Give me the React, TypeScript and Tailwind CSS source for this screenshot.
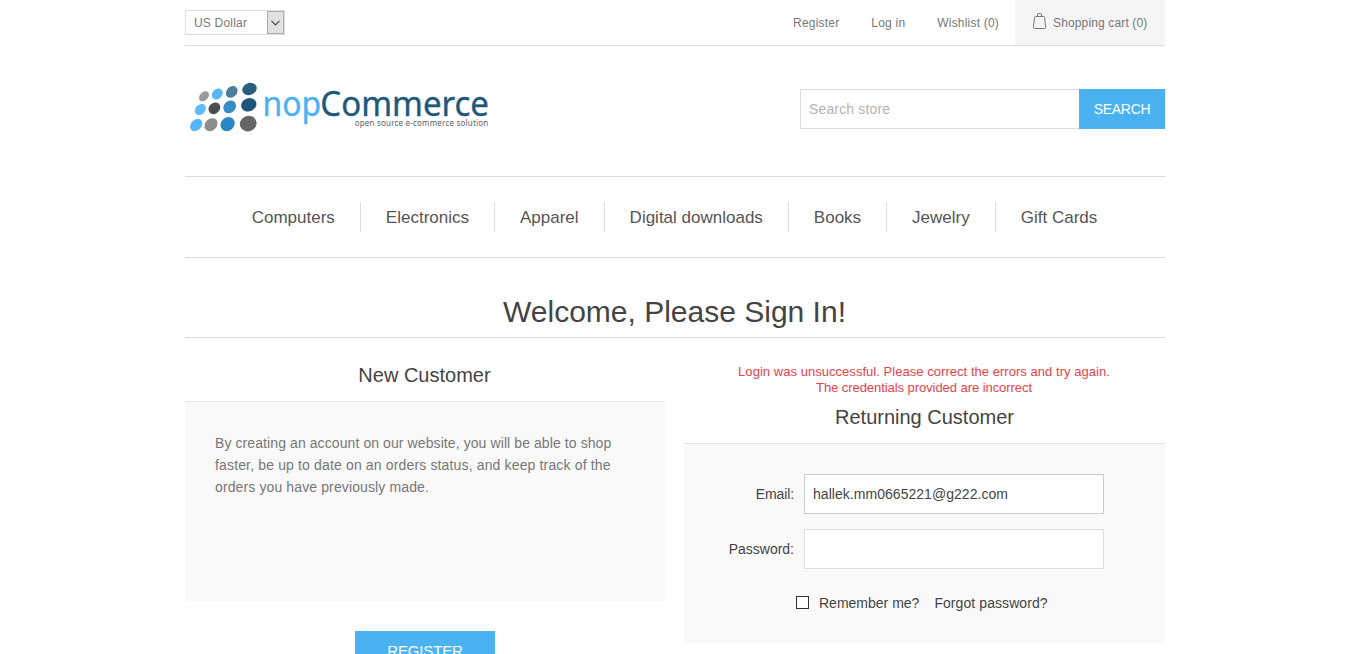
import React from "react";

const dots = [
  { x: 19, y: 21.3, rx: 5.8, ry: 4.1, fill: "#97999b" },
  { x: 32.3, y: 19, rx: 6.1, ry: 4.8, fill: "#56b6f6" },
  { x: 46.7, y: 16.9, rx: 6.5, ry: 5.2, fill: "#4b7b97" },
  { x: 64.5, y: 14, rx: 7.4, ry: 5.9, fill: "#245a7c" },
  { x: 15.3, y: 34.5, rx: 6.2, ry: 4.8, fill: "#59b9fa" },
  { x: 29.4, y: 33.3, rx: 6.4, ry: 5.3, fill: "#4a4a4c" },
  { x: 44.7, y: 31.8, rx: 6.9, ry: 5.8, fill: "#338ac4" },
  { x: 63.8, y: 29.8, rx: 7.8, ry: 6.5, fill: "#17527a" },
  { x: 11.2, y: 50, rx: 6.9, ry: 5.2, fill: "#50b4f8" },
  { x: 26, y: 49.7, rx: 7.2, ry: 5.8, fill: "#888a8c" },
  { x: 42.6, y: 49.1, rx: 7.6, ry: 6.6, fill: "#2484c2" },
  { x: 63.2, y: 48.6, rx: 8.4, ry: 7.7, fill: "#606264" },
];

function Logo() {
  return (
    <svg width="310" height="65" viewBox="0 0 310 65" className="mt-[29px] block shrink-0">
      <defs>
        <pattern id="grain" width="3" height="3" patternUnits="userSpaceOnUse">
          <circle cx="1" cy="1" r="0.5" fill="#fff" fillOpacity="0.25" />
        </pattern>
      </defs>
      {dots.map((d, i) => (
        <g key={i} transform={`rotate(${i % 4 === 3 ? -22 : -45} ${d.x} ${d.y})`}>
          <ellipse cx={d.x} cy={d.y} rx={d.rx} ry={d.ry} fill={d.fill} />
          <ellipse cx={d.x} cy={d.y} rx={d.rx} ry={d.ry} fill="url(#grain)" />
        </g>
      ))}
      <g fontFamily="'Noto Sans', sans-serif" fontSize="34.5" strokeWidth="0.35">
        <text x="77.5" y="41.2" textLength="58.5" lengthAdjust="spacingAndGlyphs" fill="#4ab2f1" stroke="#4ab2f1">nop</text>
        <text x="135.3" y="41.2" textLength="168.7" lengthAdjust="spacingAndGlyphs" fill="#20587b" stroke="#20587b">Commerce</text>
      </g>
      <text x="169.7" y="51.3" textLength="133.5" fontFamily="'Noto Sans', sans-serif" fontSize="8" fill="#59636c">
        open source e-commerce solution
      </text>
    </svg>
  );
}

const categories = ["Computers", "Electronics", "Apparel", "Digital downloads", "Books", "Jewelry", "Gift Cards"];

export default function App() {
  return (
    <div className="h-[654px] overflow-hidden bg-white pl-[185px] font-['Liberation_Sans',Arial,sans-serif] text-sm text-[#777]">
      <div className="w-[980px]">
        <header>
          <div className="flex h-[46px] justify-between border-b border-[#ddd] text-xs tracking-[0.2px]">
            <div className="mt-2.5 flex h-[25px] w-[100px] justify-between border border-[#ddd]">
              <span className="pl-2 leading-[24px]">US Dollar</span>
              <span className="flex w-[17px] items-center justify-center border border-[#adadad] bg-[#e1e1e1]">
                <svg width="9" height="6" viewBox="0 0 9 6" fill="none" stroke="#444" strokeWidth="1.2">
                  <path d="M0.5 0.8 4.5 4.8 8.5 0.8" />
                </svg>
              </span>
            </div>
            <div className="flex leading-[46px]">
              <a className="mr-8">Register</a>
              <a className="mr-8">Log in</a>
              <a className="mr-4">Wishlist (0)</a>
              <a className="flex h-[45px] w-[150px] bg-[#f5f5f5] pl-[18px] tracking-[0.14px]">
                <svg width="14" height="18" viewBox="0 0 14 18" fill="none" stroke="#777" className="mt-3 mr-1.5">
                  <path d="M2.5 4.5h8.1q.9 0 1 .9l1 10q.1 1.1-1 1.1H1.5q-1.1 0-1-1.1l1-10q.1-.9 1-.9Z" />
                  <path d="M4.5 4.5V3q0-1.5 1.2-1.5h1.8Q8.7 1.5 8.7 3v1.5" />
                </svg>
                Shopping cart (0)
              </a>
            </div>
          </div>
          <div className="flex h-[130px] justify-between">
            <Logo />
            <form className="mt-[43px] flex h-10 w-[365px]">
              <input placeholder="Search store" className="w-[279px] border border-r-0 border-[#ddd] px-2 text-sm tracking-[0.15px] outline-none placeholder:text-[#b4b4b4]" />
              <button type="button" className="w-[86px] bg-[#4ab2f1] text-sm tracking-[-0.3px] text-white">SEARCH</button>
            </form>
          </div>
        </header>
        <nav className="flex h-[82px] items-center justify-center border-y border-[#ddd] pr-px text-[17px] text-[#555]">
          {categories.map((c) => (
            <a key={c} className="h-[30px] border-l border-[#ddd] px-[25px] leading-[32px] first:border-l-0">{c}</a>
          ))}
        </nav>
        <main>
          <h1 className="h-20 border-b border-[#ddd] pt-[35px] pr-px text-center text-[30px] leading-[38px] text-[#444]">
            Welcome, Please Sign In!
          </h1>
          <div className="flex justify-between">
            <section className="w-[480px]">
              <h2 className="h-[63px] pt-[25px] pr-px text-center text-xl leading-6 text-[#444]">New Customer</h2>
              <p className="h-[200px] border-t border-[#e4e4e4] bg-[#f9f9f9] pt-[30px] pl-[30px] leading-[22px] tracking-[0.09px]">
                By creating an account on our website, you will be able to shop
                <br />
                <span className="tracking-[0.15px]">faster, be up to date on an orders status, and keep track of the</span>
                <br />
                <span className="tracking-[0.12px]">orders you have previously made.</span>
              </p>
              <button className="mx-auto mt-[30px] block h-10 w-[140px] bg-[#4ab2f1] text-[15px] tracking-[-0.15px] text-white">REGISTER</button>
            </section>
            <section className="w-[481px] text-[#444]">
              <div className="pt-[26px] pr-px text-center text-[13px] leading-4 text-[#e4434b]">
                <span className="tracking-[0.04px]">Login was unsuccessful. Please correct the errors and try again.</span>
                <br />
                <span className="tracking-[-0.06px]">The credentials provided are incorrect</span>
              </div>
              <h2 className="h-[47px] pt-[9px] text-center text-xl leading-6">Returning Customer</h2>
              <div className="h-[200px] border-t border-[#e4e4e4] bg-[#f9f9f9] pt-[30px]">
                <label className="mb-[15px] flex h-10 items-center">
                  <span className="mr-2.5 w-[110px] text-right tracking-[-0.1px]">Email:</span>
                  <input defaultValue="hallek.mm0665221@g222.com" className="h-10 w-[300px] border border-[#ccc] bg-white px-2 tracking-[0.04px] outline-none" />
                </label>
                <label className="flex h-10 items-center">
                  <span className="mr-2.5 w-[110px] text-right">Password:</span>
                  <input type="password" className="h-10 w-[300px] border border-[#ddd] bg-white px-2 outline-none" />
                </label>
                <div className="mt-6 flex h-5 items-center pl-28">
                  <input type="checkbox" className="mr-2.5 mb-0.5 size-[13px] appearance-none border border-[#333] bg-white" />
                  <label className="mr-[15px]">Remember me?</label>
                  <a className="tracking-[0.08px]">Forgot password?</a>
                </div>
              </div>
            </section>
          </div>
        </main>
      </div>
    </div>
  );
}
